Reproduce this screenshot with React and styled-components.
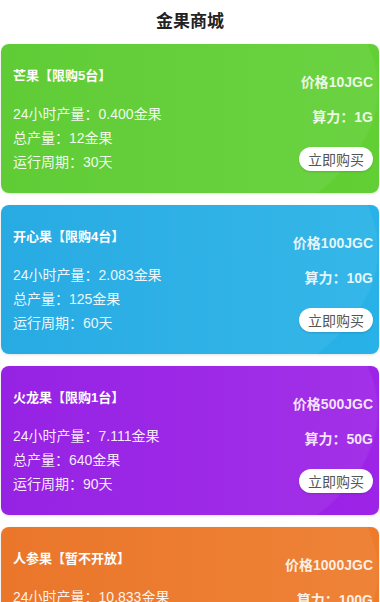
import React from 'react';
import styled, { createGlobalStyle } from 'styled-components';

const GlobalStyle = createGlobalStyle`
  html, body {
    margin: 0;
    padding: 0;
    background: #fff;
  }
  body {
    font-family: 'Liberation Sans', 'Noto Sans CJK SC', sans-serif;
  }
`;

const Page = styled.div`
  width: 380px;
`;

const Header = styled.div`
  height: 44px;
  display: flex;
  align-items: center;
  justify-content: center;
  padding-bottom: 5px;
  box-sizing: border-box;
  font-size: 17px;
  font-weight: bold;
  color: #222;
`;

const List = styled.div`
  display: flex;
  flex-direction: column;
  gap: 12px;
  padding: 0 1px;
`;

// card with a soft gloss on the right
const Card = styled.div`
  height: 149px;
  border-radius: 8px;
  display: flex;
  justify-content: space-between;
  box-shadow: 0 1px 3px rgba(0, 0, 0, 0.12);
  background:
    radial-gradient(ellipse 378px 192px at 0 45px, rgba(255, 255, 255, 0.06) 99.4%, rgba(255, 255, 255, 0) 100%),
    linear-gradient(to right, ${(p) => p.$from}, ${(p) => p.$to});
  color: #fff;
`;

const Left = styled.div`
  display: flex;
  flex-direction: column;
  padding: 24px 0 0 12px;
`;

const Title = styled.div`
  font-size: 13px;
  font-weight: bold;
  line-height: 16px;
  margin-bottom: 18px;
`;

const Line = styled.div`
  font-size: 14px;
  line-height: 24px;
  color: rgba(255, 255, 255, 0.92);
`;

const Right = styled.div`
  display: flex;
  flex-direction: column;
  align-items: flex-end;
  padding: 28px 6px 0 0;
`;

const Price = styled.div`
  font-size: 14px;
  font-weight: bold;
  line-height: 20px;
  color: rgba(255, 255, 255, 0.88);
`;

const Power = styled(Price)`
  margin-top: 15px;
`;

const BuyButton = styled.button`
  margin-top: 20px;
  width: 74px;
  height: 24px;
  border: none;
  border-radius: 12px;
  background: #fff;
  color: #555;
  font-family: inherit;
  font-size: 14px;
  padding: 0;
  box-shadow: 0 1px 2px rgba(0, 0, 0, 0.15);
  cursor: pointer;
`;

const products = [
  { name: '芒果【限购5台】', price: '10', daily: '0.400', total: '12', days: '30', power: '1G', from: '#55c92a', to: '#62d035' },
  { name: '开心果【限购4台】', price: '100', daily: '2.083', total: '125', days: '60', power: '10G', from: '#1ba6e1', to: '#28b2e7' },
  { name: '火龙果【限购1台】', price: '500', daily: '7.111', total: '640', days: '90', power: '50G', from: '#9014e2', to: '#9d24e7' },
  { name: '人参果【暂不开放】', price: '1000', daily: '10.833', total: '1300', days: '120', power: '100G', from: '#e96e1d', to: '#ed7b2a' },
];

export default function App() {
  return (
    <Page>
      <GlobalStyle />
      <Header>金果商城</Header>
      <List>
        {products.map((item) => (
          <Card key={item.name} $from={item.from} $to={item.to}>
            <Left>
              <Title>{item.name}</Title>
              <Line>24小时产量：{item.daily}金果</Line>
              <Line>总产量：{item.total}金果</Line>
              <Line>运行周期：{item.days}天</Line>
            </Left>
            <Right>
              <Price>价格{item.price}JGC</Price>
              <Power>算力：{item.power}</Power>
              <BuyButton>立即购买</BuyButton>
            </Right>
          </Card>
        ))}
      </List>
    </Page>
  );
}
